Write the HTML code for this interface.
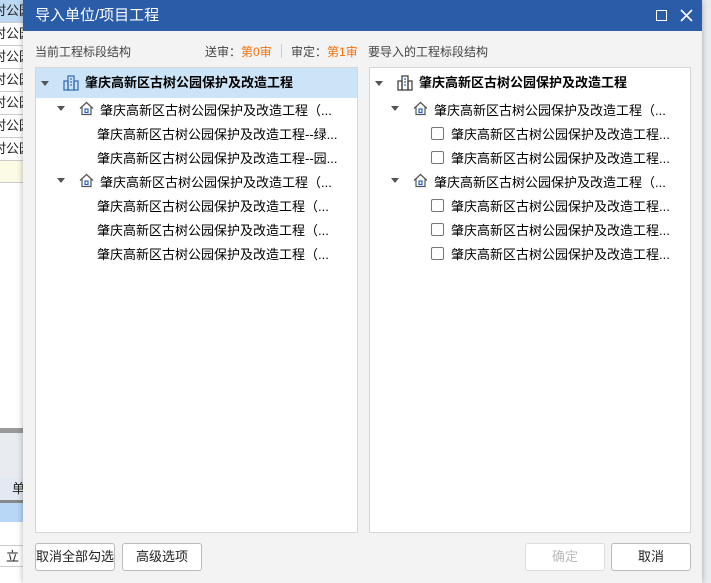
<!DOCTYPE html>
<html><head><meta charset="utf-8"><style>
*{margin:0;padding:0;box-sizing:border-box}
body{width:711px;height:583px;overflow:hidden;position:relative;background:#fff;font-family:"Liberation Sans","Noto Sans CJK SC",sans-serif;font-size:13px;color:#222}
.bgrow{position:absolute;left:0;width:23px;height:23px;border-bottom:1px solid #ccc;font-size:13px;line-height:22px;white-space:nowrap;overflow:hidden;text-indent:-7px}
.dlg{position:absolute;left:23px;top:0;width:679px;height:583px;background:#f3f3f3;box-shadow:0 0 6px rgba(0,0,0,.3)}
.title{height:31px;background:#2a5ca7;color:#fff;font-size:15px;line-height:31px;padding-left:12px;position:relative}
.panel{position:absolute;top:67px;height:466px;background:#fff;border:1px solid #d6d6d6}
.row{position:absolute;height:24px;line-height:24px;white-space:nowrap;font-size:13px;color:#000}
.tri{position:absolute;width:0;height:0;border-left:4px solid transparent;border-right:4px solid transparent;border-top:5px solid #555}
.cb{position:absolute;width:13px;height:13px;border:1px solid #777;border-radius:2px;background:#fff}
.btn{position:absolute;top:543px;height:28px;border:1px solid #bbb;border-radius:3px;background:#fff;text-align:center;line-height:26px;font-size:13px;white-space:nowrap;overflow:hidden}
.lbl{position:absolute;top:43px;font-size:12px;color:#444}
</style></head><body>
<div class="bgrow" style="top:0;background:#bcd8f3">村公园</div>
<div class="bgrow" style="top:23px">村公园</div>
<div class="bgrow" style="top:46px">村公园</div>
<div class="bgrow" style="top:69px">村公园</div>
<div class="bgrow" style="top:92px">村公园</div>
<div class="bgrow" style="top:115px">村公园</div>
<div class="bgrow" style="top:138px">村公园</div>
<div style="position:absolute;left:0;top:161px;width:23px;height:22px;background:#fbfbe6;border-bottom:1px solid #ccc"></div>
<div style="position:absolute;left:0;top:428px;width:23px;height:5px;background:#9a9a9a"></div>
<div style="position:absolute;left:0;top:433px;width:23px;height:45px;background:#e8ecf0"></div>
<div style="position:absolute;left:0;top:478px;width:23px;height:22px;background:#e3e9f2;font-size:13px;line-height:22px;padding-left:12px">单</div>
<div style="position:absolute;left:0;top:500px;width:23px;height:3px;background:#888"></div>
<div style="position:absolute;left:0;top:503px;width:23px;height:19px;background:#b8d6f6"></div>
<div style="position:absolute;left:0;top:545px;width:23px;height:22px;border-top:1px solid #ccc;border-bottom:1px solid #ccc;font-size:13px;line-height:22px;padding-left:6px">立</div>
<div style="position:absolute;left:702px;top:0;width:9px;height:583px;background:#e9ecef"></div>

<div class="dlg">
<div class="title">导入单位/项目工程
<div style="position:absolute;left:633px;top:10px;width:11px;height:11px;border:1.5px solid #fff"></div>
<svg style="position:absolute;left:657px;top:9px" width="13" height="13" viewBox="0 0 13 13" stroke="#fff" stroke-width="1.6"><path d="M1 1L12 12M12 1L1 12"/></svg>
</div>
<div class="lbl" style="left:12px">当前工程标段结构</div>
<div class="lbl" style="left:182px">送审：<span style="color:#f5700a">第0审</span></div>
<div style="position:absolute;left:258px;top:44px;width:1px;height:14px;background:#ccc"></div>
<div class="lbl" style="left:268px">审定：<span style="color:#f5700a">第1审</span></div>
<div class="lbl" style="left:345px">要导入的工程标段结构</div>

<div class="panel" style="left:12px;width:323px">
<div style="position:absolute;left:0;top:0;width:321px;height:30px;background:#cce4f7"></div>
<div class="tri" style="left:5px;top:13px"></div>
<svg style="position:absolute;left:27px;top:7px" width="16" height="16" viewBox="0 0 16 16" fill="none" stroke="#3b6fb8" stroke-width="1.3"><rect x="5" y="1" width="6" height="14"/><rect x="1" y="6" width="4" height="9"/><rect x="11" y="6" width="4" height="9"/><path d="M7 4h2M7 7h2M7 10h2"/></svg>
<div class="row" style="left:49px;top:3px;font-weight:bold">肇庆高新区古树公园保护及改造工程</div>
<div class="tri" style="left:21px;top:38px"></div>
<svg style="position:absolute;left:43px;top:33px" width="15" height="15" viewBox="0 0 15 15" fill="none" stroke="#555" stroke-width="1.2"><path d="M1 7.5L7.5 1.5 14 7.5M3 6v7.5h9V6"/><rect x="6" y="8" width="3" height="3.5" stroke="#2a63c0"/></svg>
<div class="row" style="left:64px;top:31px">肇庆高新区古树公园保护及改造工程（...</div>
<div class="row" style="left:61px;top:55px">肇庆高新区古树公园保护及改造工程--绿...</div>
<div class="row" style="left:61px;top:79px">肇庆高新区古树公园保护及改造工程--园...</div>
<div class="tri" style="left:21px;top:110px"></div>
<svg style="position:absolute;left:43px;top:105px" width="15" height="15" viewBox="0 0 15 15" fill="none" stroke="#555" stroke-width="1.2"><path d="M1 7.5L7.5 1.5 14 7.5M3 6v7.5h9V6"/><rect x="6" y="8" width="3" height="3.5" stroke="#2a63c0"/></svg>
<div class="row" style="left:64px;top:103px">肇庆高新区古树公园保护及改造工程（...</div>
<div class="row" style="left:61px;top:127px">肇庆高新区古树公园保护及改造工程（...</div>
<div class="row" style="left:61px;top:151px">肇庆高新区古树公园保护及改造工程（...</div>
<div class="row" style="left:61px;top:175px">肇庆高新区古树公园保护及改造工程（...</div>
</div>

<div class="panel" style="left:346px;width:322px">
<div class="tri" style="left:5px;top:13px"></div>
<svg style="position:absolute;left:27px;top:7px" width="16" height="16" viewBox="0 0 16 16" fill="none" stroke="#444" stroke-width="1.3"><rect x="5" y="1" width="6" height="14"/><rect x="1" y="6" width="4" height="9"/><rect x="11" y="6" width="4" height="9"/><path d="M7 4h2M7 7h2M7 10h2" stroke="#2a63c0"/></svg>
<div class="row" style="left:49px;top:3px;font-weight:bold">肇庆高新区古树公园保护及改造工程</div>
<div class="tri" style="left:21px;top:38px"></div>
<svg style="position:absolute;left:43px;top:33px" width="15" height="15" viewBox="0 0 15 15" fill="none" stroke="#555" stroke-width="1.2"><path d="M1 7.5L7.5 1.5 14 7.5M3 6v7.5h9V6"/><rect x="6" y="8" width="3" height="3.5" stroke="#2a63c0"/></svg>
<div class="row" style="left:64px;top:31px">肇庆高新区古树公园保护及改造工程（...</div>
<div class="cb" style="left:61px;top:59px"></div><div class="row" style="left:81px;top:55px">肇庆高新区古树公园保护及改造工程...</div>
<div class="cb" style="left:61px;top:83px"></div><div class="row" style="left:81px;top:79px">肇庆高新区古树公园保护及改造工程...</div>
<div class="tri" style="left:21px;top:110px"></div>
<svg style="position:absolute;left:43px;top:105px" width="15" height="15" viewBox="0 0 15 15" fill="none" stroke="#555" stroke-width="1.2"><path d="M1 7.5L7.5 1.5 14 7.5M3 6v7.5h9V6"/><rect x="6" y="8" width="3" height="3.5" stroke="#2a63c0"/></svg>
<div class="row" style="left:64px;top:103px">肇庆高新区古树公园保护及改造工程（...</div>
<div class="cb" style="left:61px;top:131px"></div><div class="row" style="left:81px;top:127px">肇庆高新区古树公园保护及改造工程...</div>
<div class="cb" style="left:61px;top:155px"></div><div class="row" style="left:81px;top:151px">肇庆高新区古树公园保护及改造工程...</div>
<div class="cb" style="left:61px;top:179px"></div><div class="row" style="left:81px;top:175px">肇庆高新区古树公园保护及改造工程...</div>
</div>

<div class="btn" style="left:12px;width:80px">取消全部勾选</div>
<div class="btn" style="left:99px;width:80px">高级选项</div>
<div class="btn" style="left:502px;width:80px;color:#bbb;border-color:#ddd">确定</div>
<div class="btn" style="left:588px;width:80px">取消</div>
</div>
</body></html>
